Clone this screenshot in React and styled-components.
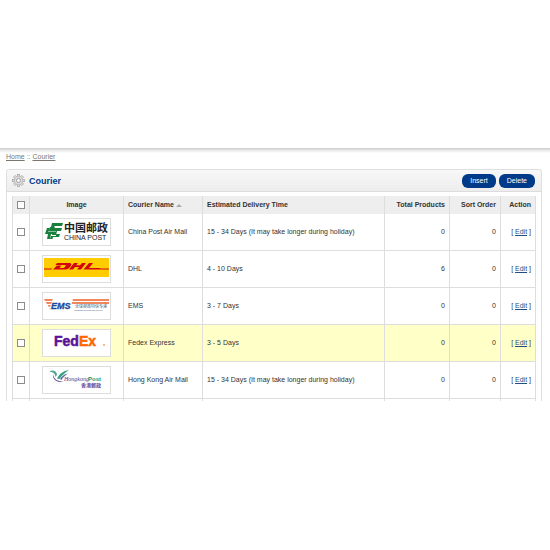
import React from 'react';
import styled, { createGlobalStyle } from 'styled-components';

const GlobalStyle = createGlobalStyle`
  * { box-sizing: border-box; }
  body {
    margin: 0;
    background: #fff;
    color: #333;
    font: 7px/10px "Liberation Sans", Arial, sans-serif;
  }
`;

const Page = styled.div`
  padding-top: 148px;
`;

const TopShadow = styled.div`
  height: 5px;
  background: linear-gradient(#c8c8c8, #e6e6e6 40%, #fff);
`;

const Content = styled.main`
  padding: 0 8px 0 6px;
`;

const Breadcrumb = styled.nav`
  height: 16px;
  line-height: 8px;
  color: #888;

  a { color: #7d766e; }
`;

const Box = styled.section`
  border: 1px solid #dfdfdf;
  border-bottom: 0;
  border-radius: 3px 3px 0 0;
`;

const BoxHeading = styled.header`
  display: flex;
  align-items: center;
  gap: 4px;
  height: 22px;
  padding: 0 6px 0 5px;
  border-bottom: 1px solid #dcdcdc;
  border-radius: 3px 3px 0 0;
  background: linear-gradient(#f8f8f8, #ededed);
`;

const Title = styled.h1`
  flex: 1;
  margin: 0;
  font-size: 9px;
  line-height: 12px;
  color: #003a88;
`;

const Buttons = styled.div`
  display: flex;
  gap: 3px;
`;

const Button = styled.button`
  height: 14px;
  padding: 0 8px;
  border: 0;
  border-radius: 6px;
  background: #003a88;
  color: #fff;
  font: inherit;
  line-height: 14px;
  cursor: pointer;
`;

const BoxContent = styled.div`
  padding: 4px 5px 0;
`;

const Table = styled.table`
  width: 100%;
  table-layout: fixed;
  border-spacing: 0;
  border-left: 1px solid #ddd;
`;

const Col = styled.col`
  width: ${({ $width }) => ($width ? `${$width}px` : 'auto')};
`;

const HeadCell = styled.th`
  height: 18px;
  padding: 0 4px;
  border-right: 1px solid #ddd;
  background: #eee;
  text-align: ${({ $align }) => $align || 'left'};
  white-space: nowrap;
`;

const Row = styled.tr`
  background: ${({ $active }) => ($active ? '#ffffc8' : '#fff')};
`;

const Cell = styled.td`
  height: 37px;
  padding: 0 4px;
  border-right: 1px solid #ddd;
  border-bottom: 1px solid #ddd;
  text-align: ${({ $align }) => $align || 'left'};
  white-space: nowrap;
`;

const EmptyCell = styled.td`
  height: 2px;
  padding: 0;
  border-right: 1px solid #ddd;
`;

const Checkbox = styled.input`
  appearance: none;
  display: block;
  width: 8px;
  height: 8px;
  margin: 0 auto;
  border: 1px solid #8c8c8c;
  background: #fff;

  &:checked { background: #003a88; }
`;

const SortArrow = styled.span`
  display: inline-block;
  border: 3px solid transparent;
  border-top: 0;
  border-bottom-color: #aaa;
`;

const EditLink = styled.a`
  color: #1f4f80;
`;

const LogoFrame = styled.div`
  width: 69px;
  height: 28px;
  margin: 0 auto;
  padding: 1px;
  border: 1px solid #ddd;
  background: #fff;

  svg { display: block; }
`;

const Logo = ({ label, children }) => (
  <LogoFrame>
    <svg width="65" height="24" viewBox="0 0 65 24" role="img" aria-label={label}>
      {children}
    </svg>
  </LogoFrame>
);

const sans = '"Liberation Sans", sans-serif';
const cjk = '"Noto Sans CJK SC", sans-serif';

const ChinaPostLogo = () => (
  <Logo label="China Post">
    <g fill="#16803c">
      <path d="M8 3H19L18 6H11L10.500 8H18L17 11H13L12 15H8L9 11H5L6 7H7Z" />
      <path d="M3 8H6L5 11H12L11 14H7L6 19H3L4 14H1Z" />
      <path d="M12 14H16L15 17H9L8.500 19H6L7 16H12Z" />
    </g>
    <path d="M10 6.500H17M4 11.500H12" stroke="#fff" strokeWidth="0.500" fill="none" />
    <text x="20" y="12" fontFamily={cjk} fontSize="11" fontWeight="700" fill="#222">中国邮政</text>
    <text x="20" y="20" fontFamily={sans} fontSize="7" fill="#222">CHINA POST</text>
  </Logo>
);

const DhlLogo = () => (
  <Logo label="DHL">
    <rect y="1" width="65" height="19" fill="#fc0" />
    <g fill="#d40511">
      <path d="M0 11.500H8L7.500 12.500H0ZM56.500 11.500H65V12.500H56Z" />
      <path d="M13 6H25C28 6 28 8 26 10C24.500 12 23 12.500 20 12.500H9L13 8.500H17.500L15.500 11H19C20.500 11 21 10 22 8H11.500Z" />
      <path d="M30 6H34L32.200 8.300H36L38 6H42L37 12.500H33L35 10H31L29 12.500H25Z" />
      <path d="M45 6H49L45 11H57L55.500 12.500H39.500Z" />
    </g>
  </Logo>
);

const EmsLogo = () => (
  <Logo label="EMS">
    <g fill="#f0875f">
      <path d="M0 5H9L8 7H1ZM1.500 8H8L7 10H3ZM3.500 11H7L6 13H5ZM5.500 14H6.500L6 16Z" />
      <path d="M29 5H65V7H28.500ZM28 8H65V10H27.500Z" />
    </g>
    <text x="7" y="15" fontFamily={sans} fontSize="9" fontWeight="700" fontStyle="italic" fill="#174a9c" stroke="#174a9c" strokeWidth="0.300">EMS</text>
    <text x="31" y="14" fontFamily={cjk} fontSize="4" fill="#456">全球邮政特快专递</text>
    <text x="30" y="17" fontFamily={sans} fontSize="2" fill="#456">Worldwide Express Mail Service</text>
  </Logo>
);

const FedexLogo = () => (
  <Logo label="FedEx">
    <text x="10" y="15" fontFamily={sans} fontSize="14" fontWeight="700" fill="#5a1296" stroke="#5a1296" strokeWidth="0.500">
      Fed<tspan fill="#f60" stroke="#f60">Ex</tspan>
    </text>
    <circle cx="60" cy="14" r="1" fill="#f9a060" />
  </Logo>
);

const HongkongPostLogo = () => (
  <Logo label="Hongkong Post">
    <path d="M5 3.500C9 1.500 13 3 13 7L11.500 9C11 5 9 4 5 3.500Z" fill="#55a596" />
    <path d="M9 6C9.500 11 13 13.500 20 13.500C13 15.500 8 11 9 6Z" fill="#493e91" />
    <path d="M13 10.500C15 6 19 3 25 2C21 5 18 7 15.500 11Z" fill="#35a27f" />
    <path d="M16 11C18 8 20 6.500 24 5.500C21 7.500 19 9 17.500 12Z" fill="#5c61a8" />
    <text x="20" y="13" fontFamily='"Liberation Serif", serif' fontSize="6" fontStyle="italic" fill="#493e91">Hongkong</text>
    <text x="44" y="13" fontFamily={sans} fontSize="6" fontWeight="700" fill="#159b70">Post</text>
    <text x="37" y="19" fontFamily='"Noto Sans CJK TC", sans-serif' fontSize="5" fontWeight="700" fill="#574c9a">香港郵政</text>
  </Logo>
);

const couriers = [
  { name: 'China Post Air Mail', time: '15 - 34 Days (It may take longer during holiday)', products: 0, order: 0, Image: ChinaPostLogo },
  { name: 'DHL', time: '4 - 10 Days', products: 6, order: 0, Image: DhlLogo },
  { name: 'EMS', time: '3 - 7 Days', products: 0, order: 0, Image: EmsLogo },
  { name: 'Fedex Express', time: '3 - 5 Days', products: 0, order: 0, Image: FedexLogo, active: true },
  { name: 'Hong Kong Air Mail', time: '15 - 34 Days (It may take longer during holiday)', products: 0, order: 0, Image: HongkongPostLogo },
];

const columns = [17, 94, 79, null, 65, 51, 35];

const teeth = [0, 45, 90, 135, 180, 225, 270, 315];

const GearIcon = () => (
  <svg width="13" height="13" viewBox="0 0 13 13" aria-hidden="true">
    <g fill="#e0e0e0" stroke="#999" strokeWidth="0.600">
      {teeth.map((angle) => (
        <rect key={angle} x="5.300" y="0.500" width="2.400" height="3" transform={`rotate(${angle} 6.500 6.500)`} />
      ))}
    </g>
    <circle cx="6.500" cy="6.500" r="4.300" fill="#dcdcdc" stroke="#a8a8a8" strokeWidth="0.500" />
    <circle cx="6.500" cy="6.500" r="2" fill="#fafafa" stroke="#888" strokeWidth="0.700" />
  </svg>
);

const CourierRow = ({ courier }) => {
  const { name, time, products, order, Image, active } = courier;
  return (
    <Row $active={active}>
      <Cell><Checkbox type="checkbox" aria-label={`Select ${name}`} /></Cell>
      <Cell><Image /></Cell>
      <Cell>{name}</Cell>
      <Cell>{time}</Cell>
      <Cell $align="right">{products}</Cell>
      <Cell $align="right">{order}</Cell>
      <Cell $align="right">[ <EditLink href="#edit">Edit</EditLink> ]</Cell>
    </Row>
  );
};

const App = () => (
  <Page>
    <GlobalStyle />
    <TopShadow />
    <Content>
      <Breadcrumb>
        <a href="#home">Home</a> :: <a href="#courier">Courier</a>
      </Breadcrumb>
      <Box>
        <BoxHeading>
          <GearIcon />
          <Title>Courier</Title>
          <Buttons>
            <Button type="button">Insert</Button>
            <Button type="button">Delete</Button>
          </Buttons>
        </BoxHeading>
        <BoxContent>
          <Table>
            <colgroup>
              {columns.map((width, i) => <Col key={i} $width={width} />)}
            </colgroup>
            <thead>
              <tr>
                <HeadCell><Checkbox type="checkbox" aria-label="Select all" /></HeadCell>
                <HeadCell $align="center">Image</HeadCell>
                <HeadCell>Courier Name <SortArrow /></HeadCell>
                <HeadCell>Estimated Delivery Time</HeadCell>
                <HeadCell $align="right">Total Products</HeadCell>
                <HeadCell $align="right">Sort Order</HeadCell>
                <HeadCell $align="right">Action</HeadCell>
              </tr>
            </thead>
            <tbody>
              {couriers.map((courier) => <CourierRow key={courier.name} courier={courier} />)}
              <tr>
                {columns.map((width, i) => <EmptyCell key={i} />)}
              </tr>
            </tbody>
          </Table>
        </BoxContent>
      </Box>
    </Content>
  </Page>
);

export default App;
